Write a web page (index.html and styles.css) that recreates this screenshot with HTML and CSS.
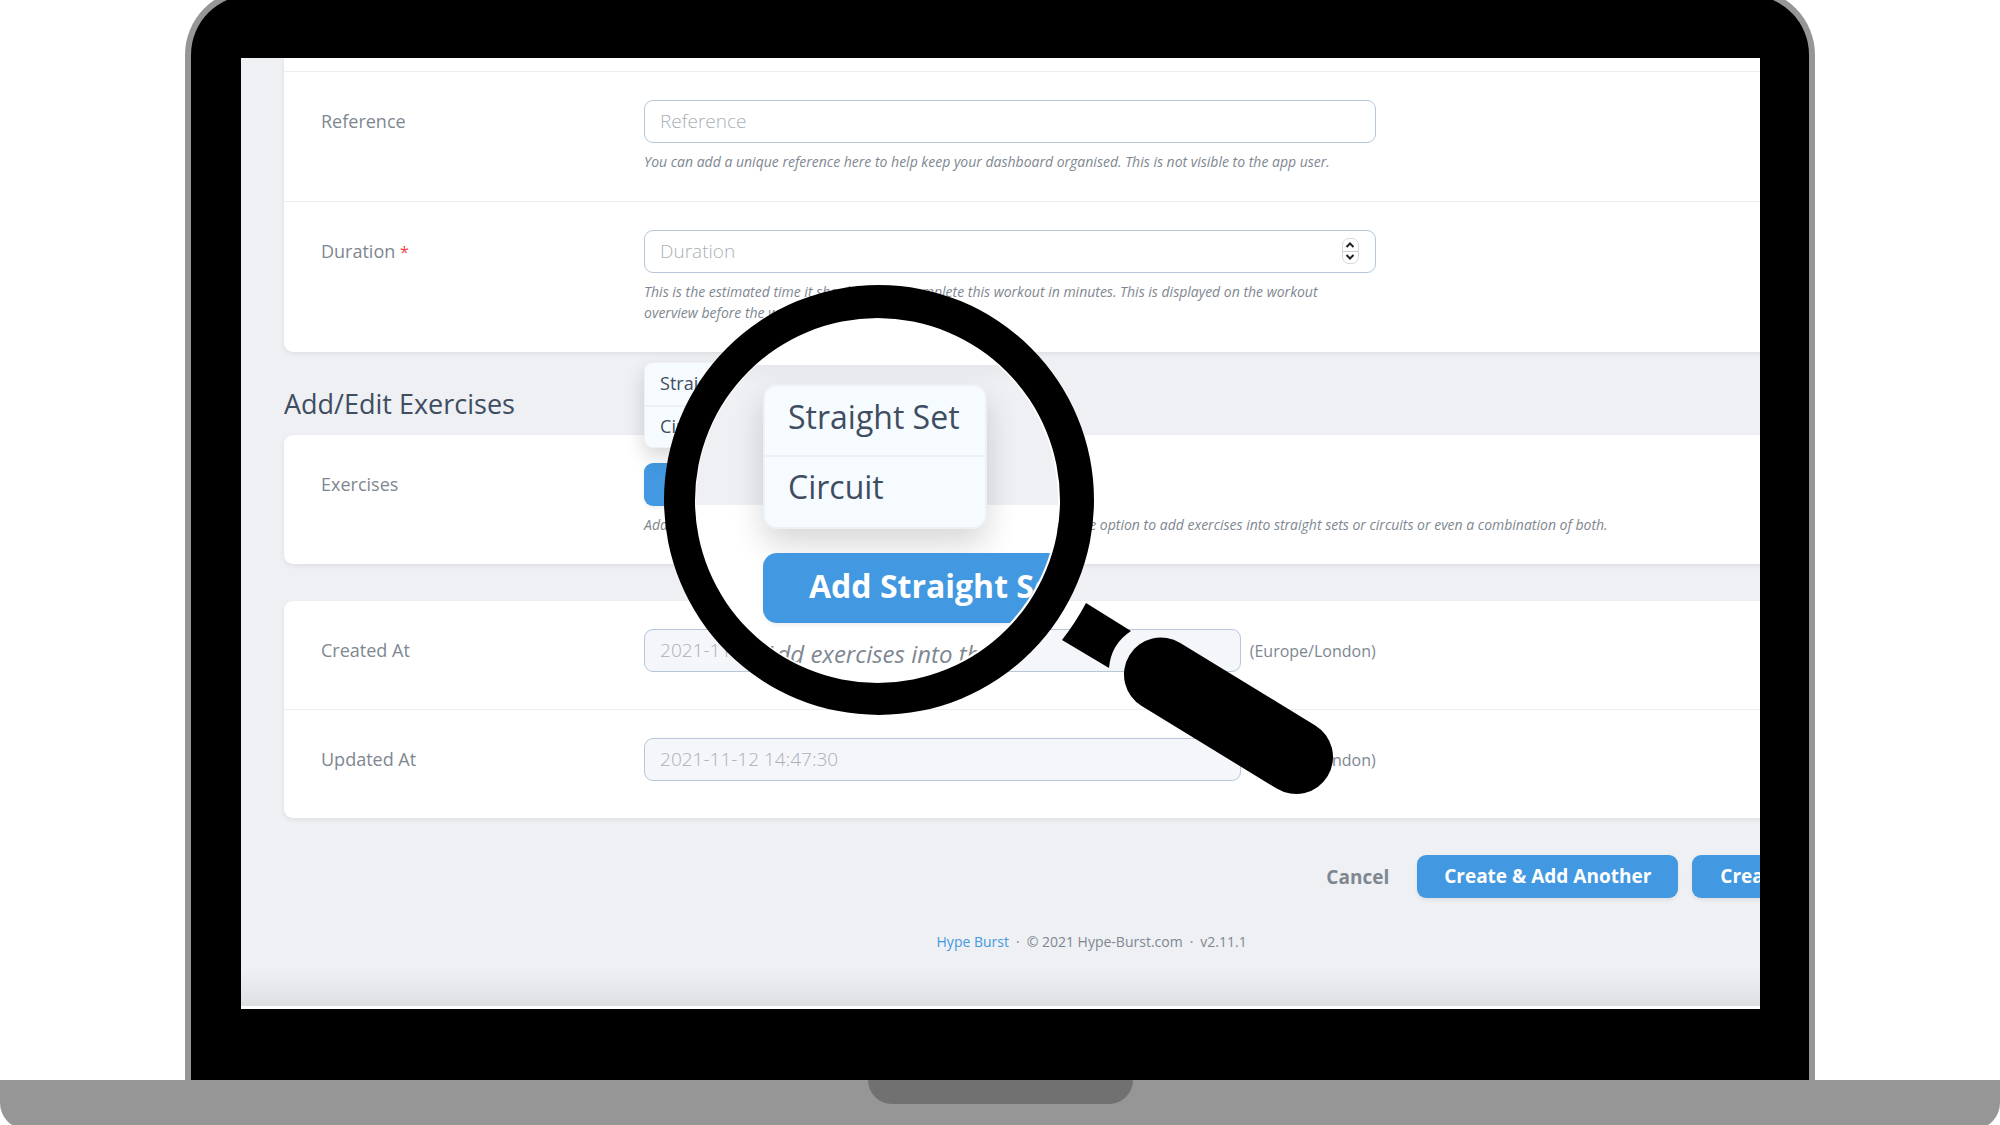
FILE: index.html
```html
<!DOCTYPE html>
<html lang="en">
<head>
    <meta charset="UTF-8">
    <meta name="viewport" content="width=device-width, initial-scale=1.0">
    <title>Create Workout</title>
    <link rel="stylesheet" href="styles.css">
</head>
<body>
    <div class="lid">
        <div class="screen">
            <main class="app">
                <form class="form">
                    <section class="card card-top">
                        <div class="row row-cut"></div>
                        <div class="row">
                            <label class="label" for="reference">Reference</label>
                            <div class="field">
                                <input class="input" id="reference" type="text" placeholder="Reference">
                                <p class="help">You can add a unique reference here to help keep your dashboard organised. This is not visible to the app user.</p>
                            </div>
                        </div>
                        <div class="row">
                            <label class="label" for="duration">Duration <span class="required">*</span></label>
                            <div class="field">
                                <div class="number">
                                    <input class="input" id="duration" type="number" placeholder="Duration">
                                    <div class="stepper">
                                        <button type="button" aria-label="Increase"><svg viewBox="0 0 10 6"><path d="M1.5 5 5 1.5 8.5 5"/></svg></button>
                                        <button type="button" aria-label="Decrease"><svg viewBox="0 0 10 6"><path d="M1.5 1 5 4.5 8.5 1"/></svg></button>
                                    </div>
                                </div>
                                <p class="help">This is the estimated time it should take to complete this workout in minutes. This is displayed on the workout overview before the workout.</p>
                            </div>
                        </div>
                    </section>

                    <h1 class="heading">Add/Edit Exercises</h1>

                    <section class="card">
                        <div class="row">
                            <span class="label">Exercises</span>
                            <div class="field field-wide">
                                <div class="add-set">
                                    <div class="menu">
                                        <button type="button">Straight Set</button>
                                        <button type="button">Circuit</button>
                                    </div>
                                    <button class="btn" type="button">Add Straight Set</button>
                                </div>
                                <p class="help">Add exercises into this workout using the button above. You also have the option to add exercises into straight sets or circuits or even a combination of both.</p>
                            </div>
                        </div>
                    </section>

                    <section class="card card-dates">
                        <div class="row">
                            <label class="label" for="created">Created At</label>
                            <div class="field date">
                                <input class="input" id="created" type="text" placeholder="2021-11-12 14:47:30" disabled>
                                <span class="zone">(Europe/London)</span>
                            </div>
                        </div>
                        <div class="row">
                            <label class="label" for="updated">Updated At</label>
                            <div class="field date">
                                <input class="input" id="updated" type="text" placeholder="2021-11-12 14:47:30" disabled>
                                <span class="zone">(Europe/London)</span>
                            </div>
                        </div>
                    </section>

                    <div class="actions">
                        <a class="cancel" href="#">Cancel</a>
                        <button class="btn" type="button">Create &amp; Add Another</button>
                        <button class="btn btn-create" type="submit">Create Workout</button>
                    </div>
                </form>

                <footer class="footer">
                    <a href="#">Hype Burst</a>
                    <span>·</span>
                    <span>© 2021 Hype-Burst.com</span>
                    <span>·</span>
                    <span>v2.11.1</span>
                </footer>
            </main>

            <!-- magnifying glass -->
            <div class="magnifier">
                <div class="glass">
                    <div class="zoomed">
                        <div class="menu menu-zoomed">
                            <button type="button">Straight Set</button>
                            <button type="button">Circuit</button>
                        </div>
                        <button class="btn btn-zoomed" type="button">Add Straight Set</button>
                        <p class="help help-zoomed">Add exercises into this workout</p>
                    </div>
                </div>
                <svg class="handle" viewBox="0 0 670 510">
                    <path fill-rule="evenodd" d="M0 215a215 215 0 1 0 430 0a215 215 0 1 0-430 0ZM31 215.500a182.500 182.500 0 1 0 365 0a182.500 182.500 0 1 0-365 0Z"/>
                    <path d="M422 318 467 346Q447 359 445 383L398 355Q412 337 422 318Z"/>
                    <path d="M497 389.500 632 472" fill="none" stroke="#000" stroke-width="74" stroke-linecap="round"/>
                </svg>
            </div>
        </div>
    </div>
    <div class="base">
        <div class="notch"></div>
    </div>
</body>
</html>
```
FILE: styles.css
```css
:root {
    --blue: #4299e1;
    --page: #eef0f4;
    --text: #3f4d61;
    --muted: #7e8791;
    --line: #eceff2;
    --border: #b5c7d9;
}

* {
    box-sizing: border-box;
    margin: 0;
    padding: 0;
}

body {
    height: 100vh;
    display: flex;
    flex-direction: column;
    overflow: hidden;
    background: #fff;
    color: var(--muted);
    font-family: 'Open Sans', 'Noto Sans', sans-serif;
    font-size: 18px;
}

button,
input {
    font: inherit;
}

/* laptop */
.lid {
    flex: 1;
    min-height: 0;
    width: 81.5%;
    margin: -11px auto 0;
    padding: 63px 49px 71px 50px;
    display: flex;
    background: #000;
    border: 6px solid #969696;
    border-bottom: 0;
    border-radius: 66px 66px 0 0;
}

.screen {
    flex: 1;
    min-width: 0;
    position: relative;
    overflow: hidden;
    background: linear-gradient(to bottom, rgba(0, 0, 0, 0) 96%, rgba(0, 0, 0, 0.07)) var(--page);
    border-bottom: 3px solid #fff;
}

.base {
    height: 49px;
    margin-bottom: -4px;
    flex-shrink: 0;
    background: #969696;
    border-radius: 0 0 26px 26px;
}

.notch {
    width: 265px;
    height: 24px;
    margin: 0 auto;
    background: #717171;
    border-radius: 0 0 24px 24px;
}

/* form */
.app {
    width: 112%;
    padding: 0 43px;
}

.card {
    background: #fff;
    border-radius: 9px;
    box-shadow: 0 2px 5px rgba(0, 0, 0, 0.07);
}

.card-top {
    border-radius: 0 0 9px 9px;
}

.row {
    display: grid;
    grid-template-columns: 20% 50% 30%;
    padding: 28px 0 29px;
    border-bottom: 1px solid var(--line);
}

.row:last-child {
    border-bottom: 0;
}

.row-cut {
    padding: 13px 0 0;
}

.label {
    padding: 0 37px;
    line-height: 42px;
}

.required {
    color: #f0413e;
    font-size: 16px;
}

.field {
    padding: 0 39px 0 37px;
}

.field-wide {
    grid-column: 2 / 4;
}

.input {
    width: 100%;
    height: 43px;
    display: block;
    padding: 0 15px 2px;
    background: #fff;
    border: 1px solid var(--border);
    border-radius: 9px;
    color: var(--text);
    font-size: 19px;
}

.input::placeholder {
    color: #a9b0b7;
    font-weight: 300;
    opacity: 1;
}

.input:disabled {
    background: #f4f6fa;
}

.help {
    margin-top: 8px;
    font-size: 14px;
    font-style: italic;
    line-height: 21px;
}

.field:not(.field-wide) .help {
    max-width: 700px;
}

.number {
    position: relative;
}

.number .input {
    appearance: textfield;
}

.number .input::-webkit-inner-spin-button {
    display: none;
}

.stepper {
    position: absolute;
    top: 8px;
    right: 17px;
    width: 17px;
    height: 26px;
    display: flex;
    flex-direction: column;
    background: #fff;
    border: 1px solid #d8d8d8;
    border-radius: 7px;
}

.stepper button {
    flex: 1;
    display: flex;
    align-items: center;
    justify-content: center;
    background: none;
    border: 0;
}

.stepper button + button {
    border-top: 1px solid #d0d0d0;
}

.stepper svg {
    width: 10px;
    height: 6px;
    fill: none;
    stroke: #222;
    stroke-width: 2;
}

.heading {
    margin: 34px 0 13px;
    color: var(--text);
    font-size: 27px;
    font-weight: 400;
    line-height: 36px;
}

.btn {
    height: 43px;
    padding: 0 27px 1px;
    background: var(--blue);
    border: 0;
    border-radius: 9px;
    box-shadow: 0 2px 4px rgba(0, 0, 0, 0.07);
    color: #fff;
    font-size: 19px;
    font-weight: 700;
}

.add-set {
    position: relative;
    display: flex;
}

.menu {
    position: absolute;
    bottom: 58px;
    left: 0;
    width: 137px;
    background: #f6fbff;
    border: 1px solid #edf1f5;
    border-radius: 9px;
    box-shadow: 0 9px 20px rgba(0, 0, 0, 0.16);
}

.menu button {
    width: 100%;
    height: 42px;
    display: block;
    padding: 0 15px 3px;
    background: none;
    border: 0;
    color: var(--text);
    text-align: left;
    white-space: nowrap;
}

.menu button + button {
    border-top: 2px solid #edf1f5;
}

.card-dates {
    margin-top: 37px;
}

.card-dates .row {
    padding-bottom: 37px;
}

.date {
    display: flex;
    align-items: center;
    gap: 9px;
}

.date .input {
    flex: 1;
    min-width: 0;
}

.zone {
    font-size: 16px;
}

.actions {
    margin-top: 37px;
    display: flex;
    justify-content: flex-end;
    align-items: center;
    gap: 14px;
}

.cancel {
    margin-right: 14px;
    color: var(--muted);
    font-size: 19px;
    font-weight: 700;
    text-decoration: none;
}

.btn-create {
    width: 207px;
    padding: 0 0 1px;
}

.footer {
    margin-top: 33px;
    display: flex;
    justify-content: center;
    gap: 7px;
    font-size: 14px;
    line-height: 21px;
}

.footer a {
    color: var(--blue);
    text-decoration: none;
}

/* magnifying glass */
.magnifier {
    position: absolute;
    top: 227px;
    left: 423px;
    width: 670px;
    height: 510px;
}

.handle {
    position: absolute;
    inset: 0;
}

.glass {
    width: 366px;
    height: 366px;
    margin: 32px 30px;
    overflow: hidden;
    background: #fff;
    border: 2px solid #fff;
    border-radius: 50%;
}

.zoomed {
    width: 520px;
    margin-top: 46px;
    padding: 19px 0 0 67px;
    background: linear-gradient(#e6e8ec, #eef0f4 20px) no-repeat 0 0 / 100% 140px;
}

.menu-zoomed {
    position: static;
    width: 224px;
    margin-bottom: 24px;
    padding-bottom: 3px;
    border: 2px solid #edf1f5;
    border-radius: 14px;
    box-shadow: 0 15px 32px rgba(0, 0, 0, 0.16);
    font-size: 32px;
}

.menu-zoomed button {
    height: 69px;
    padding: 0 23px 8px;
}

.btn-zoomed {
    width: 360px;
    height: 70px;
    padding: 0 46px 6px;
    border-radius: 14px;
    font-size: 32px;
    text-align: left;
}

.help-zoomed {
    margin-top: 14px;
    font-size: 24px;
    line-height: 34px;
}
```
